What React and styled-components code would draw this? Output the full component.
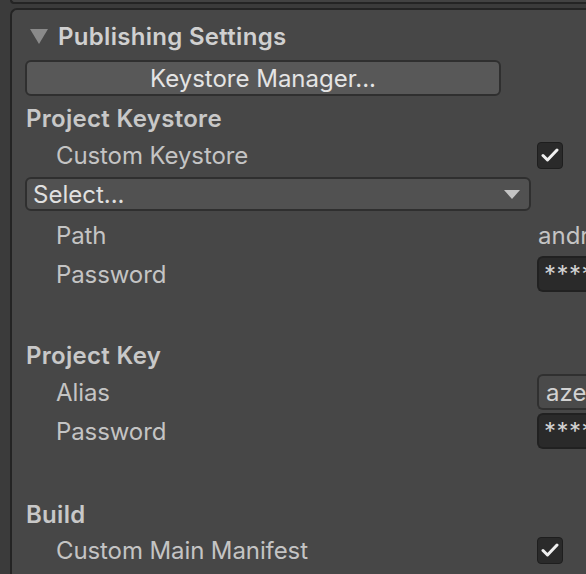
import React from "react";
import styled, { createGlobalStyle } from "styled-components";

const Global = createGlobalStyle`
  html, body { margin: 0; padding: 0; background: #3b3b3b; }
  body { width: 586px; height: 574px; overflow: hidden; font-family: Inter, "Noto Sans", sans-serif; }
`;

const Page = styled.div`
  width: 586px;
  height: 574px;
  overflow: hidden;
  background: #3b3b3b;
  padding-left: 10px;
  box-sizing: border-box;
`;

const PrevPanel = styled.div`
  height: 2px;
  border-left: 2px solid #242424;
  border-bottom: 2px solid #242424;
  border-bottom-left-radius: 5px;
  background: #424242;
  margin-bottom: 4px;
`;

const Panel = styled.div`
  border-left: 2px solid #242424;
  border-top: 2px solid #242424;
  border-top-left-radius: 7px;
  background: #474747;
  height: 700px;
  padding-top: 5px;
  display: flex;
  flex-direction: column;
`;

const Row = styled.div`
  height: ${(p) => p.$h || 40}px;
  display: flex;
  align-items: center;
  padding-left: 13px;
  flex-shrink: 0;
`;

const FoldoutTitle = styled.div`
  display: flex;
  align-items: center;
  gap: 10px;
  padding-left: 5px;
  font-size: 24px;
  font-weight: 600;
  letter-spacing: 0.3px;
  color: #d0d0d0;
`;

const Header = styled.div`
  font-size: 24px;
  font-weight: 600;
  letter-spacing: 0.3px;
  color: #c8c8c8;
  padding-left: 1px;
`;

const Label = styled.div`
  width: 512px;
  flex-shrink: 0;
  box-sizing: border-box;
  padding-left: 31px;
  font-size: 24px;
  letter-spacing: -0.1px;
  color: #c4c4c4;
  white-space: nowrap;
`;

const Value = styled.div`
  font-size: 24px;
  color: #c4c4c4;
  padding-left: 1px;
  white-space: nowrap;
`;

const Button = styled.button`
  width: 476px;
  height: 36px;
  box-sizing: border-box;
  background: #585858;
  border: 2px solid #2f2f2f;
  border-radius: 6px;
  color: #e4e4e4;
  font-family: Inter, "Noto Sans", sans-serif;
  font-size: 24px;
  padding: 0;
  display: flex;
  align-items: center;
  justify-content: center;
`;

const Dropdown = styled.div`
  width: 506px;
  height: 34px;
  box-sizing: border-box;
  background: #515151;
  border: 2px solid #2f2f2f;
  border-radius: 6px;
  display: flex;
  align-items: center;
  justify-content: space-between;
  padding: 0 9px 0 6px;
  font-size: 24px;
  color: #e0e0e0;
`;

const Field = styled.div`
  width: 100px;
  height: 36px;
  box-sizing: border-box;
  background: ${(p) => (p.$dark ? "#2a2a2a" : "#4a4a4a")};
  border: 2px solid ${(p) => (p.$dark ? "#212121" : "#303030")};
  border-right: none;
  border-radius: 6px 0 0 6px;
  display: flex;
  align-items: center;
  padding-left: ${(p) => (p.$dark ? 5 : 7)}px;
  font-size: 24px;
  color: #d2d2d2;
  white-space: nowrap;
  overflow: hidden;
  flex-shrink: 0;
  letter-spacing: ${(p) => (p.$dark ? "0.5px" : "0")};
`;

const Check = styled.div`
  width: 26px;
  height: 27px;
  box-sizing: border-box;
  background: #2a2a2a;
  border: 1px solid #1e1e1e;
  border-radius: 4px;
  display: flex;
  align-items: center;
  justify-content: center;
  flex-shrink: 0;
`;

const Spacer = styled.div`
  height: ${(p) => p.$h}px;
  flex-shrink: 0;
`;

const FoldArrow = () => (
  <svg width="18" height="15" viewBox="0 0 18 15">
    <polygon points="0,0 18,0 9,15" fill="#8a8a8a" />
  </svg>
);

const DropArrow = () => (
  <svg width="16" height="9" viewBox="0 0 16 9">
    <polygon points="0,0 16,0 8,9" fill="#c4c4c4" />
  </svg>
);

const CheckMark = () => (
  <svg width="18" height="14" viewBox="0 0 18 14">
    <polyline points="2,7.5 6.5,12 16,2" fill="none" stroke="#f0f0f0" strokeWidth="3" strokeLinecap="round" strokeLinejoin="round" />
  </svg>
);

export default function App() {
  return (
    <Page>
      <Global />
      <PrevPanel />
      <Panel>
        <Row $h={42}>
          <FoldoutTitle>
            <FoldArrow />
            Publishing Settings
          </FoldoutTitle>
        </Row>
        <Row $h={42}>
          <Button>Keystore Manager...</Button>
        </Row>
        <Row $h={38}>
          <Header>Project Keystore</Header>
        </Row>
        <Row $h={36}>
          <Label>Custom Keystore</Label>
          <Check><CheckMark /></Check>
        </Row>
        <Row $h={42}>
          <Dropdown>
            <span>Select...</span>
            <DropArrow />
          </Dropdown>
        </Row>
        <Row $h={40}>
          <Label>Path</Label>
          <Value>android.keystore</Value>
        </Row>
        <Row $h={38}>
          <Label>Password</Label>
          <Field $dark>********</Field>
        </Row>
        <Spacer $h={43} />
        <Row $h={38}>
          <Header>Project Key</Header>
        </Row>
        <Row $h={36}>
          <Label>Alias</Label>
          <Field>azerty</Field>
        </Row>
        <Row $h={42}>
          <Label>Password</Label>
          <Field $dark>********</Field>
        </Row>
        <Spacer $h={42} />
        <Row $h={40}>
          <Header>Build</Header>
        </Row>
        <Row $h={32}>
          <Label>Custom Main Manifest</Label>
          <Check><CheckMark /></Check>
        </Row>
      </Panel>
    </Page>
  );
}
